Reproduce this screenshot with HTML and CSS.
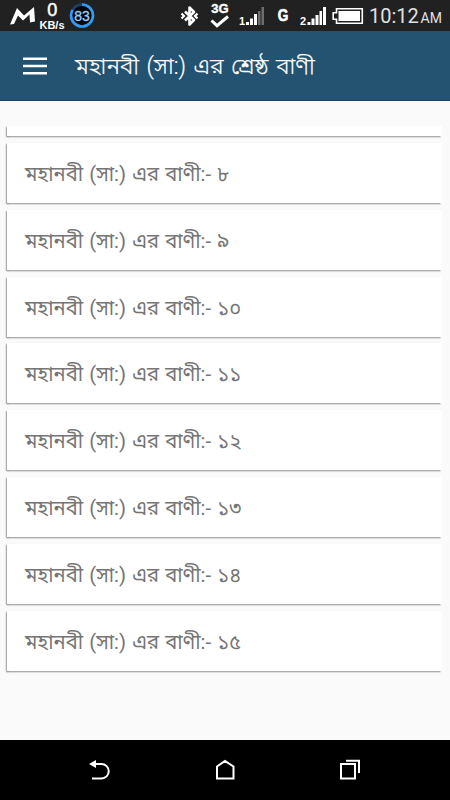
FILE: index.html
```html
<!DOCTYPE html>
<html lang="bn">
<head>
<meta charset="utf-8">
<title>মহানবী (সা:) এর শ্রেষ্ঠ বাণী</title>
<link rel="stylesheet" href="styles.css">
</head>
<body>
<div class="screen">
  <div class="status">
    <svg class="logo" width="26" height="31" viewBox="0 0 26 31"><path d="M0 24.500 7 8l7 7.500L24 7l1 14.500-5 1-.5-8-6.500 6-5-5-4 8.500z" fill="#fff"/></svg>
    <div class="speed"><span class="num">0</span><span class="unit">KB/s</span></div>
    <svg class="ring" width="26" height="31" viewBox="0 0 26 31"><circle cx="13" cy="15.500" r="11" fill="#050505" stroke="#15456d" stroke-width="2.600"/><circle cx="13" cy="15.500" r="11" fill="none" stroke="#3599f3" stroke-width="2.600" stroke-dasharray="57.400 69.120" transform="rotate(-90 13 15.500)"/><text x="13" y="20.500" text-anchor="middle" class="pct">83</text></svg>
    <svg class="bt" width="20" height="31" viewBox="0 0 20 31"><path d="m5 11.500 9 8.500-4.500 4.500v-17L14 12l-9 8.500" fill="none" stroke="#fff" stroke-width="2.600" stroke-linejoin="round"/><path d="M1.500 13.500 4 16l-2.500 2.500M17.500 13.500 15 16l2.500 2.500" fill="none" stroke="#fff" stroke-width="2.200"/></svg>
    <div class="data"><span>3G</span><svg width="20" height="14" viewBox="0 0 20 14"><path d="m1.500 5.500 5.500 5.200L18 1.500" fill="none" stroke="#fff" stroke-width="3"/></svg></div>
    <svg class="sim1" width="26" height="31" viewBox="0 0 26 31"><text x="0" y="25" class="sim">1</text><path d="M7 22h3v3H7zM11 18.500h3V25h-3zM15 14h3v11h-3z" fill="#fff"/><path d="M19 11h2.500v14H19zM22.500 7H25v18h-2.500z" fill="#6d6d6d"/></svg>
    <span class="g">G</span>
    <svg class="sim2" width="27" height="31" viewBox="0 0 27 31"><text x="0" y="25" class="sim">2</text><path d="M7.500 22h3v3h-3zM11.500 18.500h3V25h-3zM15.500 15h3v10h-3zM19.500 11H22v14h-2.500zM23 7h3v18h-3z" fill="#fff"/></svg>
    <svg class="bat" width="32" height="31" viewBox="0 0 32 31"><path d="M4.500 8.700h25.800v14.600H4.500v-4H1.200V12.700h3.300z" fill="#212121" stroke="#fff" stroke-width="1.600"/><path d="M6.500 11H28v10H6.500z" fill="#fff"/></svg>
    <span class="clock">10:12</span><span class="ampm">AM</span>
  </div>
  <header>
    <svg width="24" height="18" viewBox="0 0 24 18"><path d="M0 1.700h24M0 9h24M0 16.300h24" stroke="#fff" stroke-width="2.500"/></svg>
    <h1>মহানবী (সা:) এর শ্রেষ্ঠ বাণী</h1>
  </header>
  <main>
    <div class="list">
      <div class="card stub"></div>
      <div class="card">মহানবী (সা:) এর বাণী:- ৮</div>
      <div class="card">মহানবী (সা:) এর বাণী:- ৯</div>
      <div class="card">মহানবী (সা:) এর বাণী:- ১০</div>
      <div class="card">মহানবী (সা:) এর বাণী:- ১১</div>
      <div class="card">মহানবী (সা:) এর বাণী:- ১২</div>
      <div class="card">মহানবী (সা:) এর বাণী:- ১৩</div>
      <div class="card">মহানবী (সা:) এর বাণী:- ১৪</div>
      <div class="card">মহানবী (সা:) এর বাণী:- ১৫</div>
    </div>
  </main>
  <nav>
    <svg width="24" height="24" viewBox="0 0 24 24"><path d="M5 6h8.500a7.200 7.200 0 0 1 0 14.500H4" fill="none" stroke="#fff" stroke-width="2"/><path d="M1 6l7-4v8z" fill="#fff"/></svg>
    <svg width="24" height="24" viewBox="0 0 24 24"><path d="M4 8.500 12 3l8.500 5.500v12H4z" fill="none" stroke="#fff" stroke-width="2"/></svg>
    <svg width="24" height="24" viewBox="0 0 24 24"><path d="M3 6h14v14.500H3zM8 2.700h13V15" fill="none" stroke="#fff" stroke-width="2"/></svg>
  </nav>
</div>
</body>
</html>
```

FILE: styles.css
```css
body{margin:0;font-family:Roboto,"Noto Sans Bengali","Noto Sans",sans-serif}
.screen{width:450px;height:800px;display:flex;flex-direction:column;background:#fafafa;overflow:hidden}
svg{display:block;flex:none}
.status{height:31px;background:#212121;color:#fff;display:flex;flex:none;white-space:nowrap}
.logo{margin-left:10px}
.speed{width:28px;margin-left:2px;display:flex;flex-direction:column;align-items:center;font-family:"Liberation Sans",sans-serif}
.num{font-size:19px;line-height:18px;height:19px;margin-top:1px;transform:scaleX(.95);-webkit-text-stroke:.5px #fff}
.unit{font-size:11px;line-height:11px;font-weight:bold}
.ring{margin-left:2.500px}
.pct{font:14px "Liberation Sans",sans-serif;fill:#9bd0ff;stroke:#9bd0ff;stroke-width:.3px}
.bt{margin-left:85.500px}
.data{width:20px;margin-left:10px;display:flex;flex-direction:column;align-items:center;font:bold 13px/13px "Liberation Sans",sans-serif}
.data span{height:13px;margin-top:2px;-webkit-text-stroke:.4px #fff}
.sim1{margin-left:9px}
.sim{font:bold 11px "Liberation Sans",sans-serif;fill:#fff}
.g{width:14px;margin-left:11px;text-align:center;font:bold 16px/32px "Liberation Sans",sans-serif;transform:scaleX(.85);-webkit-text-stroke:.6px #fff}
.sim2{margin-left:10px}
.bat{margin-left:5px}
.clock{width:50px;margin-left:5px;font:20px/32px Roboto,sans-serif;color:#e0e0e0}
.ampm{margin-left:1.500px;font:14px/36px Roboto,sans-serif;color:#e0e0e0}
header{height:70px;flex:none;display:flex;align-items:center;background:#235370;box-shadow:inset 0 -1px #194264;color:#fff}
header svg{margin-left:23px}
h1{margin:2px 0 0 28px;font-size:23px;font-weight:300;line-height:34px;word-spacing:1.900px;white-space:nowrap;-webkit-text-stroke:.2px #fff}
main{flex:1;padding:25px 7px 0}
.list{overflow:hidden;display:flex;flex-direction:column;gap:6.860px;margin:0 -7px;padding:0 8px 8px 7px}
.card{box-sizing:border-box;height:60px;flex:none;padding:0 18px;background:#fff;box-shadow:-.7px 1px 1.500px rgba(0,0,0,.5);font-size:20.200px;line-height:62px;word-spacing:1.200px;color:#757575;white-space:nowrap}
.stub{height:10px}
nav{height:60px;flex:none;background:#000;display:flex;align-items:center;justify-content:space-between;padding:0 88px}
```
